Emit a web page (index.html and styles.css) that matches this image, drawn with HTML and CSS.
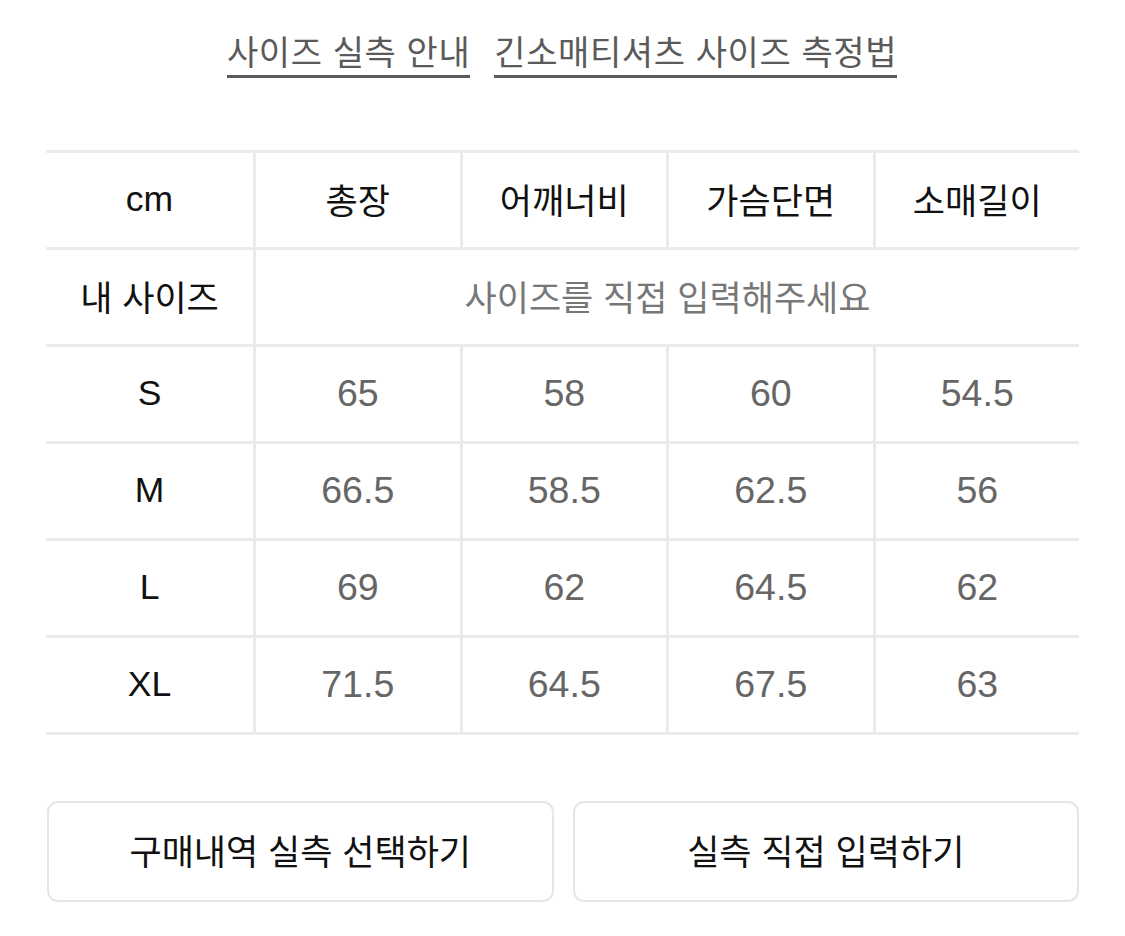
FILE: index.html
```html
<!DOCTYPE html>
<html lang="ko">
<head>
<meta charset="utf-8">
<link rel="stylesheet" href="styles.css">
</head>
<body>
<div class="page">
  <nav class="links">
    <a class="link">사이즈 실측 안내</a>
    <a class="link">긴소매티셔츠 사이즈 측정법</a>
  </nav>
  <div class="table">
    <div class="cell label latin">cm</div>
    <div class="cell head">총장</div>
    <div class="cell head">어깨너비</div>
    <div class="cell head">가슴단면</div>
    <div class="cell head">소매길이</div>

    <div class="cell label">내 사이즈</div>
    <div class="cell mine">사이즈를 직접 입력해주세요</div>

    <div class="cell label latin">S</div>
    <div class="cell num">65</div>
    <div class="cell num">58</div>
    <div class="cell num">60</div>
    <div class="cell num">54.5</div>

    <div class="cell label latin">M</div>
    <div class="cell num">66.5</div>
    <div class="cell num">58.5</div>
    <div class="cell num">62.5</div>
    <div class="cell num">56</div>

    <div class="cell label latin">L</div>
    <div class="cell num">69</div>
    <div class="cell num">62</div>
    <div class="cell num">64.5</div>
    <div class="cell num">62</div>

    <div class="cell label latin">XL</div>
    <div class="cell num">71.5</div>
    <div class="cell num">64.5</div>
    <div class="cell num">67.5</div>
    <div class="cell num">63</div>
  </div>
  <div class="buttons">
    <button class="btn">구매내역 실측 선택하기</button>
    <button class="btn">실측 직접 입력하기</button>
  </div>
</div>
</body>
</html>
```
FILE: styles.css
```css
html, body {
  margin: 0;
  padding: 0;
  background: #ffffff;
}
body {
  font-family: "Liberation Sans", "Noto Sans CJK KR", sans-serif;
  color: #111;
}
.page {
  width: 1033px;
  padding: 0 46px;
}
.links {
  height: 150px;
  display: flex;
  justify-content: center;
  gap: 24px;
  padding-top: 29px;
  box-sizing: border-box;
  margin-left: -1px;
}
.link {
  font-family: "Noto Sans CJK KR", sans-serif;
  font-size: 34px;
  line-height: 44px;
  height: 46px;
  color: #5a5a5a;
  border-bottom: 3px solid #5a5a5a;
  letter-spacing: 0.6px;
}
.table {
  display: grid;
  grid-template-columns: 207px repeat(4, 1fr);
  grid-auto-rows: 97px;
  border-top: 3px solid #ebebeb;
}
.cell {
  display: flex;
  align-items: center;
  justify-content: center;
  border-bottom: 3px solid #ebebeb;
  border-left: 3px solid #ebebeb;
  box-sizing: border-box;
  padding-bottom: 4px;
}
.cell.label {
  border-left: none;
  font-family: "Noto Sans CJK KR", sans-serif;
  font-size: 35px;
  color: #111;
}
.cell.label.latin {
  font-family: "Liberation Sans", sans-serif;
  font-size: 35.5px;
  padding-bottom: 2px;
}
.cell.head {
  font-family: "Noto Sans CJK KR", sans-serif;
  font-size: 35px;
  color: #111;
}
.cell.mine {
  grid-column: span 4;
  font-family: "Noto Sans CJK KR", sans-serif;
  font-size: 35px;
  color: #777;
}
.cell.num {
  font-size: 37.5px;
  color: #666;
  padding-bottom: 2px;
}
.buttons {
  display: flex;
  gap: 19px;
  margin-top: 66px;
  padding-left: 1px;
}
.btn {
  flex: 1;
  height: 101px;
  background: #fff;
  border: 2px solid #e6e6e6;
  border-radius: 11px;
  font-family: "Noto Sans CJK KR", sans-serif;
  font-size: 35px;
  color: #111;
  padding: 0 0 4px 0;
}
```
